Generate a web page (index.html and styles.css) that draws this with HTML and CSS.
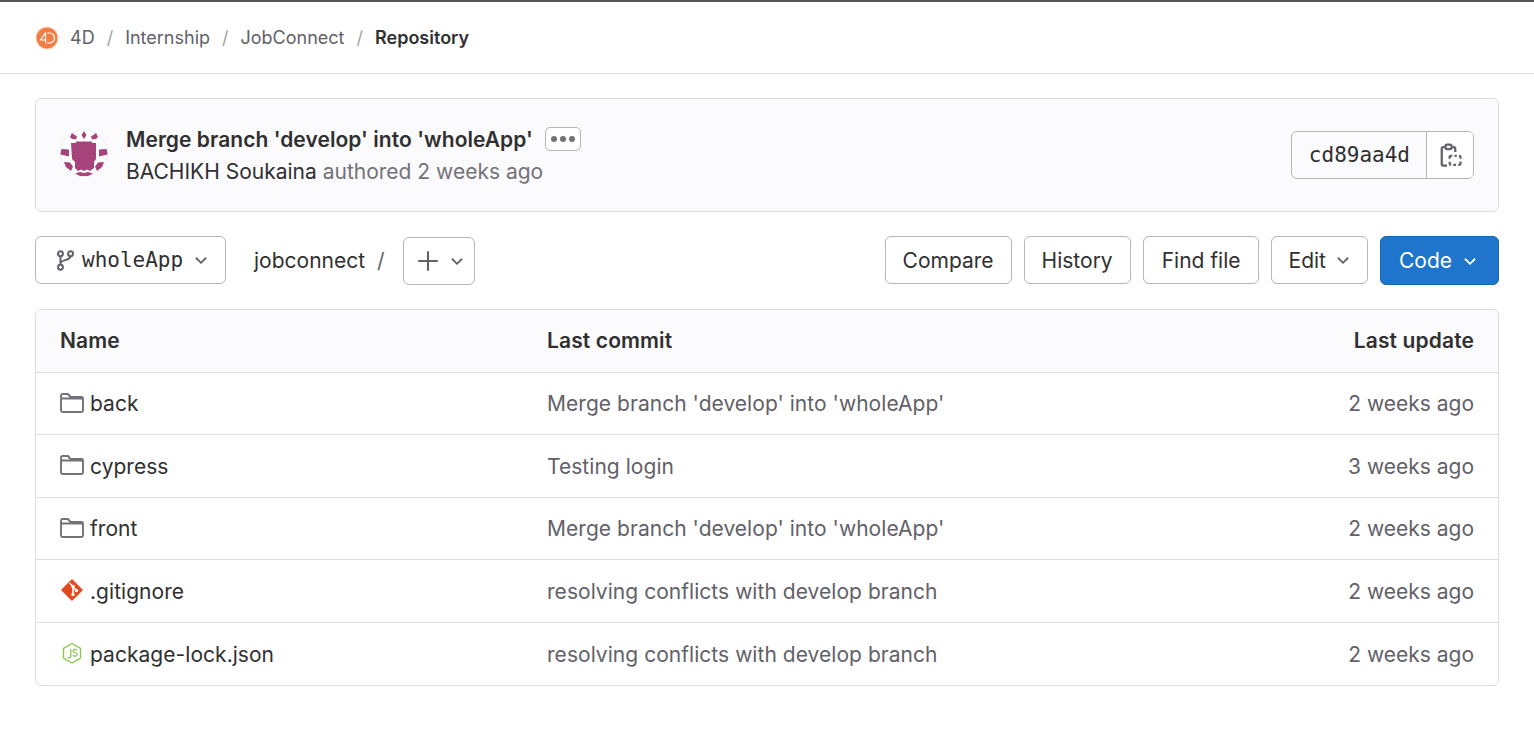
FILE: index.html
```html
<!DOCTYPE html>
<html lang="en">
<head>
    <meta charset="UTF-8">
    <title>Repository</title>
    <link rel="stylesheet" href="styles.css">
</head>
<body>
<header class="topbar">
    <svg class="group-logo" width="24" height="24" viewBox="0 0 24 24">
        <circle cx="12" cy="12" r="11.5" fill="#fbd9c6"/>
        <circle cx="12" cy="12" r="10.5" fill="#f27d42"/>
        <path d="M10.5 6.5 5.5 14h6M10.5 6.5V17M12 7h2.5a5 5 0 0 1 0 10H12" fill="none" stroke="#fff" stroke-width="1.2"/>
    </svg>
    <a class="crumb">4D</a><span class="sep">/</span>
    <a class="crumb">Internship</a><span class="sep">/</span>
    <a class="crumb">JobConnect</a><span class="sep">/</span>
    <a class="crumb crumb-current">Repository</a>
</header>

<main class="content">
    <section class="commit-box">
        <svg class="avatar" width="48" height="48" viewBox="0 0 48 48">
            <circle cx="24" cy="24" r="23.500" fill="#fff" stroke="#ececf0"/>
            <path d="M11 14h5v-1.500h16V14h4v16l-2 3v6l-4 3-3-1.500-3 1.500-3-1.500-3 1.500-3-3v-6l-3-3z" fill="#a6437a"/>
            <path d="M24 2l2.500 4L24 10l-2.500-4zM10 8l2-4 2 1.500 3 2-1 3-4-.5zM38 8l-2-4-2 1.500-3 2 1 3 4-.5zM1.500 20l7.500 .5v7l-8.500-2zM46.500 20l-7.500 .5v7l8.500-2zM4 33l6 .5 3 4-2 4.500-5-4zM44 33l-6 .5-3 4 2 4.500 5-4zM15 44.500l5-1.500 4 1 4-1 5 1.500-5 2.500h-8z" fill="#a6437a"/>
        </svg>
        <div class="commit-info">
            <div class="commit-title">
                <span>Merge branch 'develop' into 'wholeApp'</span>
                <button class="dots-btn"><i></i><i></i><i></i></button>
            </div>
            <div class="commit-meta"><span class="author">BACHIKH Soukaina</span> authored 2 weeks ago</div>
        </div>
        <div class="sha-group">
            <span class="sha">cd89aa4d</span>
            <button class="sha-copy">
                <svg width="24" height="24" viewBox="0 0 16 16" fill="none" stroke="#626168" stroke-width="1.500">
                    <path d="M4.500 2.700H3.500a1 1 0 0 0-1 1V14a1 1 0 0 0 1 1H6"/>
                    <path d="M9.500 2.700h1a1 1 0 0 1 1 1V6"/>
                    <rect x="5" y="1" width="4" height="3" rx="1"/>
                    <path d="M7.700 10.500V9.500a1 1 0 0 1 1-1h.8M11 8.500h1.500M14 8.500h0a1 1 0 0 1 1 1v1M15 12.300v1.200a1 1 0 0 1-1 1h-.5M12 14.500h-1.800M8.800 14.500a1 1 0 0 1-1-1v-1"/>
                </svg>
            </button>
        </div>
    </section>

    <section class="toolbar">
        <button class="btn branch-btn">
            <svg width="23" height="23" viewBox="0 0 16 16" fill="none" stroke="#626168" stroke-width="1.400">
                <circle cx="4.500" cy="3.300" r="1.700"/>
                <circle cx="4.500" cy="12.700" r="1.700"/>
                <circle cx="11.500" cy="3.300" r="1.700"/>
                <path d="M4.500 5v6M11.500 5c0 3-7 2.500-7 5"/>
            </svg>
            <span class="mono">wholeApp</span>
            <svg class="chev" width="18" height="18" viewBox="0 0 16 16"><path d="M3.500 6l4.500 4.500L12.500 6" fill="none" stroke="#626168" stroke-width="1.600"/></svg>
        </button>
        <span class="path-name">jobconnect</span>
        <span class="path-sep">/</span>
        <button class="btn add-btn">
            <svg width="24" height="24" viewBox="0 0 16 16"><path d="M8 1.500v13M1.500 8h13" fill="none" stroke="#626168" stroke-width="1.400"/></svg>
            <svg class="chev" width="18" height="18" viewBox="0 0 16 16"><path d="M3.500 6l4.500 4.500L12.500 6" fill="none" stroke="#626168" stroke-width="1.600"/></svg>
        </button>
        <div class="actions">
            <button class="btn">Compare</button>
            <button class="btn">History</button>
            <button class="btn find-btn">Find file</button>
            <button class="btn edit-btn">Edit
                <svg class="chev" width="18" height="18" viewBox="0 0 16 16"><path d="M3.500 6l4.500 4.500L12.500 6" fill="none" stroke="#626168" stroke-width="1.600"/></svg>
            </button>
            <button class="btn code-btn">Code
                <svg class="chev" width="18" height="18" viewBox="0 0 16 16"><path d="M3.500 6l4.500 4.500L12.500 6" fill="none" stroke="#fff" stroke-width="1.600"/></svg>
            </button>
        </div>
    </section>

    <section class="files">
        <div class="row head">
            <div class="col-name">Name</div>
            <div class="col-commit">Last commit</div>
            <div class="col-date">Last update</div>
        </div>
        <div class="row">
            <div class="col-name">
                <svg class="file-icon" width="24" height="24" viewBox="0 0 16 16"><path d="M.700 13V3a1 1 0 0 1 1-1h3.600l1.700 2h7.300a1 1 0 0 1 1 1v8a1 1 0 0 1-1 1H1.700a1 1 0 0 1-1-1zM1 5h14" fill="none" stroke="#737278" stroke-width="1.300"/></svg>
                back
            </div>
            <div class="col-commit">Merge branch 'develop' into 'wholeApp'</div>
            <div class="col-date">2 weeks ago</div>
        </div>
        <div class="row">
            <div class="col-name">
                <svg class="file-icon" width="24" height="24" viewBox="0 0 16 16"><path d="M.700 13V3a1 1 0 0 1 1-1h3.600l1.700 2h7.300a1 1 0 0 1 1 1v8a1 1 0 0 1-1 1H1.700a1 1 0 0 1-1-1zM1 5h14" fill="none" stroke="#737278" stroke-width="1.300"/></svg>
                cypress
            </div>
            <div class="col-commit">Testing login</div>
            <div class="col-date">3 weeks ago</div>
        </div>
        <div class="row">
            <div class="col-name">
                <svg class="file-icon" width="24" height="24" viewBox="0 0 16 16"><path d="M.700 13V3a1 1 0 0 1 1-1h3.600l1.700 2h7.300a1 1 0 0 1 1 1v8a1 1 0 0 1-1 1H1.700a1 1 0 0 1-1-1zM1 5h14" fill="none" stroke="#737278" stroke-width="1.300"/></svg>
                front
            </div>
            <div class="col-commit">Merge branch 'develop' into 'wholeApp'</div>
            <div class="col-date">2 weeks ago</div>
        </div>
        <div class="row">
            <div class="col-name">
                <svg class="file-icon" width="24" height="24" viewBox="0 0 24 24">
                    <path d="M12 2 22 12 12 22 2 12z" fill="#e2491f" stroke="#e2491f" stroke-width="1.500" stroke-linejoin="round"/>
                    <path d="M9.500 5l3.500 3.500M13 8.500v8M13 9l3.500 3.500" stroke="#fff" stroke-width="1.600" fill="none"/>
                    <circle cx="13" cy="8.500" r="1.700" fill="#fff"/>
                    <circle cx="13" cy="16.500" r="1.700" fill="#fff"/>
                    <circle cx="16.500" cy="12.500" r="1.700" fill="#fff"/>
                </svg>
                .gitignore
            </div>
            <div class="col-commit">resolving conflicts with develop branch</div>
            <div class="col-date">2 weeks ago</div>
        </div>
        <div class="row">
            <div class="col-name">
                <svg class="file-icon" width="24" height="24" viewBox="0 0 24 24">
                    <path d="M12 2.500 20.500 7.300v9.900L12 22l-8.500-4.800V7.300z" fill="none" stroke="#8cc84b" stroke-width="1.400" stroke-linejoin="round"/>
                    <path d="M10.800 8v7.500c0 1.500-2 1.700-3 .7M17 9.300c-1-1.500-3.800-1.300-3.800.6 0 2.300 4 1.400 4 3.700 0 2-3.200 2.100-4.300.6" fill="none" stroke="#8cc84b" stroke-width="1.300"/>
                </svg>
                package-lock.json
            </div>
            <div class="col-commit">resolving conflicts with develop branch</div>
            <div class="col-date">2 weeks ago</div>
        </div>
    </section>
</main>
</body>
</html>
```

FILE: styles.css
```css
* {
    box-sizing: border-box;
}

body {
    margin: 0;
    background: #fff;
    color: #303030;
    font-family: Inter, "Noto Sans", sans-serif;
    font-size: 21px;
    border-top: 2px solid #555;
}

button {
    font-family: inherit;
    font-size: inherit;
    color: inherit;
    background: #fff;
    cursor: pointer;
}

svg {
    flex: none;
    display: block;
}

/* top breadcrumb */
.topbar {
    display: flex;
    align-items: center;
    height: 72px;
    padding: 0 35px;
    border-bottom: 1px solid #dcdcde;
    font-size: 18px;
    color: #626168;
}

.group-logo {
    margin-right: 11px;
}

.sep {
    margin: 0 12px;
    color: #a4a3a8;
}

.crumb-current {
    color: #303030;
    font-weight: 600;
}

.content {
    padding: 24px 35px 0;
}

/* last commit box */
.commit-box {
    display: flex;
    align-items: center;
    height: 114px;
    padding: 0 24px;
    background: #fbfafd;
    border: 1px solid #dcdcde;
    border-radius: 6px;
}

.avatar {
    margin: 0 18px 4px 0;
}

.commit-title {
    display: flex;
    align-items: center;
    gap: 12px;
    font-weight: 600;
    letter-spacing: .05px;
}

.dots-btn {
    display: flex;
    align-items: center;
    justify-content: center;
    gap: 3px;
    width: 36px;
    height: 24px;
    padding: 0;
    border: 1px solid #b5b5ba;
    border-radius: 5px;
}

.dots-btn i {
    width: 6px;
    height: 6px;
    border-radius: 50%;
    background: #737278;
}

.commit-meta {
    margin-top: 7px;
    color: #737278;
}

.author {
    color: #303030;
}

.sha-group {
    display: flex;
    margin-left: auto;
    height: 48px;
    border: 1px solid #b5b5ba;
    border-radius: 6px;
    overflow: hidden;
}

.sha {
    display: flex;
    align-items: center;
    padding: 0 16px 0 17px;
    font-family: "DejaVu Sans Mono", monospace;
    font-size: 21px;
    border-right: 1px solid #b5b5ba;
}

.sha-copy {
    width: 46px;
    padding: 0;
    border: 0;
    display: flex;
    align-items: center;
    justify-content: center;
}

/* branch + actions */
.toolbar {
    display: flex;
    align-items: flex-start;
    margin-top: 24px;
    height: 49px;
}

.btn {
    display: flex;
    align-items: center;
    height: 48px;
    padding: 0 17px;
    border: 1px solid #b5b5ba;
    border-radius: 6px;
}

.branch-btn {
    width: 191px;
    padding: 0 18px;
}

.mono {
    font-family: "DejaVu Sans Mono", monospace;
    margin-left: 5px;
}

.chev {
    margin-left: 9px;
}

.path-name {
    align-self: center;
    margin-left: 28px;
}

.path-sep {
    align-self: center;
    margin: 0 18px 0 12px;
    color: #626168;
}

.add-btn {
    padding: 0 11px 0 12px;
    width: 72px;
    margin-top: 1px;
}

.add-btn .chev {
    margin-left: 8px;
}

.actions {
    display: flex;
    gap: 12px;
    margin-left: auto;
}

.find-btn {
    padding: 0 17px 0 18px;
}

.edit-btn {
    padding: 0 15px 0 17px;
}

.edit-btn .chev {
    margin-left: 8px;
}

.code-btn {
    height: 49px;
    padding: 0 19px 0 18px;
    background: #1f75cb;
    border-color: #1068bf;
    color: #fff;
}

/* file table */
.files {
    margin-top: 24px;
    border: 1px solid #dcdcde;
    border-radius: 6px;
    overflow: hidden;
}

.row {
    display: flex;
    align-items: center;
    height: 62.500px;
    padding: 1px 24px 0;
    border-bottom: 1px solid #dcdcde;
    color: #626168;
    letter-spacing: .04px;
}

.row:last-child {
    border-bottom: 0;
}

.head {
    padding-top: 0;
    background: #fbfafd;
    color: #303030;
    font-weight: 600;
    letter-spacing: .12px;
}

.col-name {
    display: flex;
    align-items: center;
    gap: 6px;
    width: 487px;
    color: #303030;
}

.col-commit {
    flex: 1;
}

.col-date {
    text-align: right;
}

.row:not(.head) .col-date {
    letter-spacing: 0;
}

.file-icon {
    margin-top: -2px;
}
```
